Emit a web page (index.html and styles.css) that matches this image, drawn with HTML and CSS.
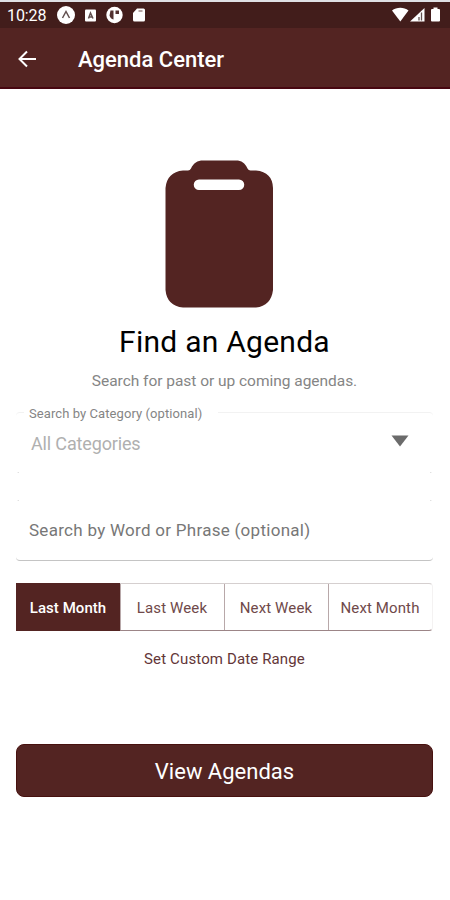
FILE: index.html
```
<!DOCTYPE html>
<html lang="en">
<head>
<meta charset="utf-8">
<meta name="viewport" content="width=device-width, initial-scale=1">
<title>Agenda Center</title>
<link rel="stylesheet" href="styles.css">
</head>
<body>
<div class="status">
  <span class="time">10:28</span>
  <svg class="notices" width="90" height="20" viewBox="0 0 90 20">
    <g fill="#fff">
      <circle cx="10" cy="10" r="9"/>
      <rect x="29" y="4.5" width="11" height="12" rx="1"/>
      <circle cx="58.5" cy="10" r="8.2"/>
      <path d="M81 3.500h6.500a1.500 1.500 0 0 1 1.500 1.500v10a1.500 1.500 0 0 1-1.500 1.500h-9a1.500 1.500 0 0 1-1.500-1.500V8z"/>
    </g>
    <path d="M6.500 13 10 6.500l3.500 6.500" fill="none" stroke="#62504f" stroke-width="1.500"/>
    <path d="M32.500 13.500 34.500 8l2.500 5.500M33 12h3.500" fill="none" stroke="#62504f" stroke-width="1.500"/>
    <path d="M54.500 5.500h3v9q-3-.5-4-4zM59.500 5.500h3.500v3.500h-3.500z" fill="#51302f"/>
    <path d="M82.500 6h4" stroke="#9c8887" stroke-width="1.500"/>
  </svg>
  <svg class="signals" width="50" height="16" viewBox="0 0 50 16">
    <path d="M0 3.500C4.500-.2 12-.2 16.500 3.500L8.300 14.500z" fill="#fff"/>
    <path d="M32.500 1v13.500H18z" fill="#fff"/>
    <path d="M29.500 5.500v8M27 10v3.500" stroke="#62504f" stroke-width="1.300"/>
    <path d="M41.500 0.500h4V2h1.500q1 0 1 1v10.500q0 1-1 1h-7q-1 0-1-1V3q0-1 1-1h1.500z" fill="#fff"/>
  </svg>
</div>
<header class="bar">
  <svg class="back" width="20" height="20" viewBox="0 0 20 20"><path d="M19 10H3M10 2.500 2.500 10l7.500 7.500" fill="none" stroke="#fff" stroke-width="2"/></svg>
  <h1>Agenda Center</h1>
</header>
<main>
  <svg class="board" width="108" height="148" viewBox="0 0 108 148">
    <path fill="#532422" fill-rule="evenodd" d="M18 10.500H23Q25 10.500 26 8.500C28.500 3 32.500.5 38 .5H71C76.500.5 80 3 82.500 8.500Q83.500 10.500 85.500 10.500H91Q107.500 12 108 28V130Q106 146 91 147.500H18Q2 146 .5 130V28Q2 12 18 10.500ZM34 19.500a5.250 5.250 0 0 0 0 10.500H74a5.250 5.250 0 0 0 0-10.500Z"/>
  </svg>
  <h2>Find an Agenda</h2>
  <p class="hint">Search for past or up coming agendas.</p>
  <div class="field select">
    <label>Search by Category (optional)</label>
    <div class="value"><span>All Categories</span><svg width="18" height="12" viewBox="0 0 18 12"><path d="M.5.500h17L9 11.500z" fill="#6b6b6b"/></svg></div>
  </div>
  <div class="field phrase">Search by Word or Phrase (optional)</div>
  <div class="ranges">
    <button class="on">Last Month</button>
    <button>Last Week</button>
    <button>Next Week</button>
    <button>Next Month</button>
  </div>
  <a class="custom">Set Custom Date Range</a>
  <button class="view">View Agendas</button>
</main>
</body>
</html>
```
FILE: styles.css
```
* { box-sizing: border-box; }
body { margin: 0; background: #fff; color: #000; font-family: Roboto, sans-serif; height: 900px; overflow: hidden; }
h1, h2, p { margin: 0; font-weight: 400; }
button { border: 0; padding: 0; margin: 0; background: none; font-family: inherit; }
svg { display: block; flex: none; }

.status { height: 28px; border-top: 2px solid #dfe0e4; background: #421d1b; display: flex; align-items: center; padding: 0 8px 0 7px; color: #fff; }
.time { font-size: 16px; font-weight: 400; width: 49px; line-height: 24px; padding-top: 2px; letter-spacing: -.1px; }
.signals { margin-left: auto; }
.bar { height: 61px; background: #532422; border-bottom: 2px solid #470711; display: flex; align-items: center; padding: 2px 0 0 17px; color: #fff; }
.bar h1 { font-size: 22px; font-weight: 500; margin-left: 41px; padding-top: 2px; letter-spacing: 0; line-height: 30px; }

main { display: flex; flex-direction: column; padding: 71px 17px 0 16px; }
.board { margin-left: 149px; }
h2 { font-size: 30px; line-height: 36px; letter-spacing: .25px; text-align: center; margin-top: 16px; }
.hint { font-size: 15.500px; line-height: 20px; color: #858585; text-align: center; letter-spacing: -.03px; margin-top: 11px; }

.field {
  border-radius: 4px;
  background-image: linear-gradient(#d8d8d8, #d8d8d8), linear-gradient(#d8d8d8, #d8d8d8);
  background-size: 2px 1px;
  background-repeat: no-repeat;
}
.select { height: 61px; margin-top: 21px; border-top: 1px solid #f2f2f2; background-position: 1px 100%, calc(100% - 1px) 100%; }
.select label { display: block; width: 194px; height: 18px; margin: -8px 0 0 8px; padding-left: 5px; background: #fff; color: #858585; font-size: 13px; line-height: 18px; letter-spacing: .08px; }
.value { display: flex; justify-content: space-between; align-items: center; padding: 0 24px 0 15px; margin-top: 8px; height: 24px; color: #b0b0b0; font-size: 18px; letter-spacing: -.15px; }
.value svg { margin-top: -5px; }
.phrase { height: 61px; margin-top: 27px; border-bottom: 1px solid #c4c4c4; padding-left: 13px; color: #777; font-size: 17px; line-height: 61px; letter-spacing: .28px; background-position: 1px 0, calc(100% - 1px) 0; }

.ranges { display: grid; grid-template-columns: repeat(4, 1fr); height: 48px; margin-top: 22px; border: 1px solid #d5cfcf; border-bottom-color: #9c8587; border-left: 0; border-right-color: #f4f2f2; border-radius: 0 4px 4px 0; }
.ranges button { border-left: 1px solid #b8a8a9; color: #70494a; font-size: 15px; letter-spacing: .12px; padding: 2px 1px 0 0; }
.ranges .on { background: #532422; color: #fff; border-color: #532422; font-weight: 500; margin: -1px 0; letter-spacing: .05px; }
.custom { text-align: center; color: #633638; font-size: 15px; line-height: 20px; letter-spacing: .13px; margin-top: 18px; }
.view { height: 53px; margin-top: 75px; padding-top: 2px; border-radius: 8px; background: #532422; border: 1px solid #47110f; color: #fff; font-size: 22px; letter-spacing: 0; }
```
